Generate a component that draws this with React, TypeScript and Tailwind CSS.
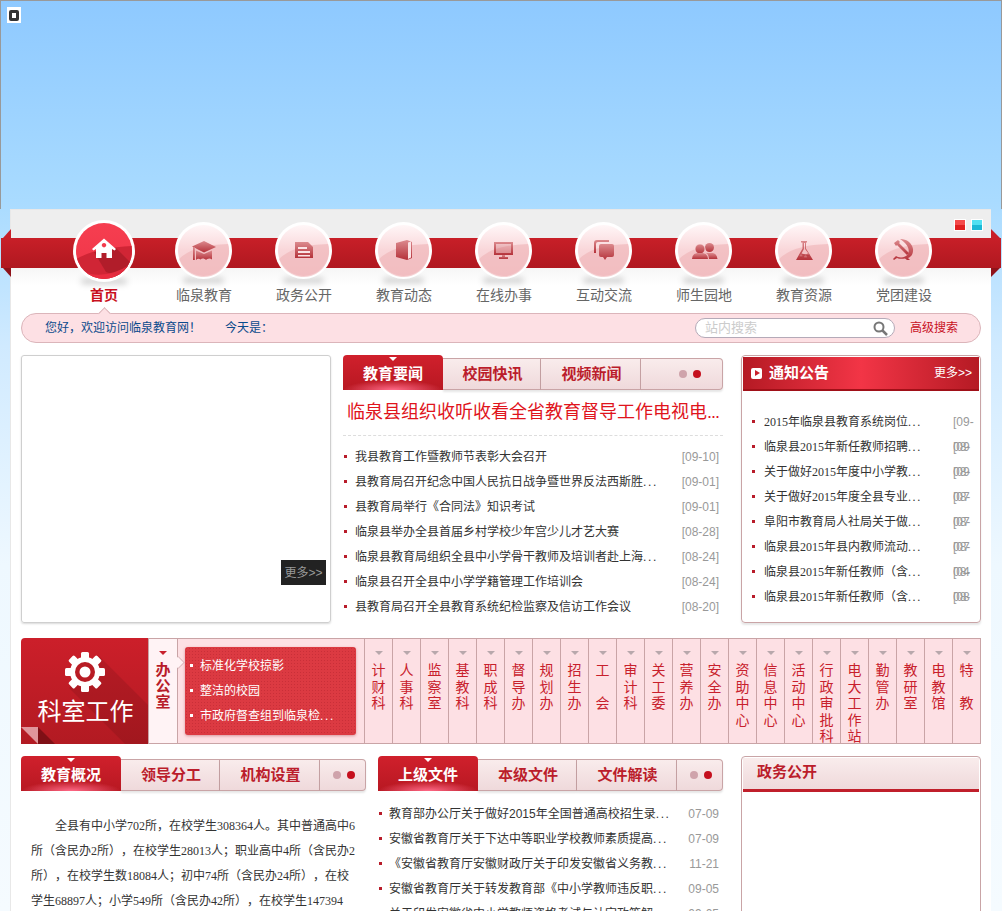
import React from "react";

const NAV: [string, React.ReactNode][] = [
  ["临泉教育", <g><path d="M29 19l12 6-12 5.500-12-6z" /><path d="M21 28.500l8 3.500 8-3.500v9c-2.500-2-5-.5-6 .5-1.500-1.500-4-2-5.500-.5-1.500-1-3-1-4.500.5z" /><rect x="18" y="25" width="1.800" height="13" /></g>],
  ["政务公开", <g><path d="M20 20h13l5 5v11H20z" /><path d="M23 25h9v2h-9zM23 29h12v2H23zM23 33h12v1.500H23z" fill="#fbe3e5" /></g>],
  ["教育动态", <g><path d="M21 21l11-3 5 2v16l-5 2-11-3z" /><path d="M33 20.500l3-1v16l-3 1.500z" fill="#fbe3e5" /></g>],
  ["在线办事", <g><path fillRule="evenodd" d="M19 20h19v13H19zM21 22v9h15v-9z" /><path d="M21 22h15v9H21z" opacity=".35" /><path d="M27 33h3v2h3v2h-9v-2h3z" /></g>],
  ["互动交流", <g><path d="M19 31V21q0-3 3-3h12v2H23q-2 0-2 2v9z" /><path d="M26 22h11q2 0 2 2v9q0 2-2 2h-5l-2 3-2-3h-2q-2 0-2-2v-9q0-2 2-2z" /></g>],
  ["师生园地", <g><circle cx="34.500" cy="25.500" r="4.500" /><path d="M31 31h7q4 1 4.500 6H34q0-4-3-6z" /><circle cx="25" cy="27" r="5" stroke="#fbdfe1" strokeWidth=".7" /><path d="M17 37q0-5 5-6h6q5 1 5 6z" /></g>],
  ["教育资源", <g><path fillRule="evenodd" d="M26 19h6v1.500h-1v6L38 38H21l6.500-11.500v-6h-1.500zM29 21v6l-2.500 4.500c3 1 6 1 7 0L30 27v-6z" /><circle cx="26" cy="34" r="1.500" /><circle cx="30.500" cy="35" r="1.500" /><circle cx="33" cy="32.500" r="1.200" /></g>],
  ["党团建设", <g><path d="M25 17c7 0 12 4 13 10 .5 5-2 8-5 9l2 2h-3l-2-1.500c-3 .5-6 .5-8-.5l-3 2-1-1 3-3 2 1c4 1 8 0 10-3 2-4 0-10-8-15z" /><path d="M19 21l4-3 2 2-1 1 10 10-2 2-10-10-1 1z" /></g>],
];

function Circle({ idx, children }: { idx: number; children: React.ReactNode }) {
  const g = `art${idx}`;
  const b = `bg${idx}`;
  return (
    <svg width="57" height="57" viewBox="0 0 57 57">
      <defs>
        <linearGradient id={b} x1="0" y1="0" x2="0" y2="1">
          <stop offset="0" stopColor="#fff6f7" />
          <stop offset="0.5" stopColor="#f9d6d9" />
          <stop offset="1" stopColor="#f6cdd0" />
        </linearGradient>
        <linearGradient id={g} x1="0" y1="0" x2="0" y2="1">
          <stop offset="0" stopColor="#dc8a8e" />
          <stop offset="1" stopColor="#b5323a" />
        </linearGradient>
      </defs>
      <circle cx="28.500" cy="28.500" r="28.500" fill="#fff" />
      <circle cx="28.500" cy="28.500" r="25.500" fill={`url(#${b})`} />
      <path d="M4 37Q18 23 53 22A25.500 25.500 0 0 1 4 37Z" fill="#efb3b5" opacity=".6" />
      <g fill={`url(#${g})`}>{children}</g>
    </svg>
  );
}

function HomeCircle() {
  return (
    <svg width="62" height="62" viewBox="0 0 62 62">
      <defs>
        <linearGradient id="hb" x1="0" y1="0" x2="0" y2="1">
          <stop offset="0" stopColor="#f63e50" />
          <stop offset="1" stopColor="#ef3548" />
        </linearGradient>
        <clipPath id="hc"><circle cx="31" cy="31" r="28" /></clipPath>
      </defs>
      <circle cx="31" cy="31" r="31" fill="#fff" />
      <circle cx="31" cy="31" r="28" fill="url(#hb)" />
      <g clipPath="url(#hc)">
        <path d="M2 40Q20 28 60 26V62H0Z" fill="#d02535" />
        <path d="M21 32l22-4 16 16-10 14-16-6z" fill="#a91c28" opacity=".8" />
        <path d="M6 50Q30 62 58 44V62H6Z" fill="#ef3044" opacity=".8" />
      </g>
      <path fill="#fff" fillRule="evenodd" d="M31 18.500l12 10.500-1.500 1.500-2.500-1.500v9h-5.500v-5h-5v5H23v-9l-2.500 1.500L19 29zM31 23a2.200 2.200 0 1 0 .01 0z" />
    </svg>
  );
}

function Tabs({ tabs, widths, dots }: { tabs: string[]; widths: string[]; dots: string }) {
  return (
    <div className="flex items-end h-[36px] pb-[1px]">
      <div className={`relative h-[35px] ${widths[0]} rounded-t-[4px] flex items-center justify-center pt-[3px] text-white text-[15px] font-bold bg-[radial-gradient(ellipse_50%_28%_at_50%_100%,#ff6a88,transparent),linear-gradient(#d0202c,#b81822)]`}>
        <span className="absolute top-[2px] left-1/2 -ml-[4px] w-0 h-0 border-x-[4px] border-x-transparent border-t-[4px] border-t-white" />
        {tabs[0]}
      </div>
      {tabs.slice(1).map((t, i) => (
        <div key={t} className={`h-[32px] ${widths[i + 1]} border-y border-r border-[#c9a4a6] pl-[2px] flex items-center justify-center text-[15px] font-bold text-[#bb1d2b] bg-gradient-to-b from-[#f9ecec] to-[#efd9db] shadow-[0_2px_2px_rgba(0,0,0,0.1)]`}>
          {t}
        </div>
      ))}
      <div className={`h-[32px] ${widths[3]} ${dots} border-y border-r border-[#c9a4a6] rounded-r-[4px] flex items-center justify-center gap-[6px] bg-gradient-to-b from-[#f9ecec] to-[#efd9db] shadow-[0_2px_2px_rgba(0,0,0,0.1)]`}>
        <span className="w-[8px] h-[8px] rounded-full bg-[#cfa3ab]" />
        <span className="w-[8px] h-[8px] rounded-full bg-[#c5101e]" />
      </div>
    </div>
  );
}

const Dots = () => <span className="tracking-[1.6px]">...</span>;

function NewsRow({ t, d, dots, gap }: { t: string; d: string; dots?: boolean; gap: string }) {
  return (
    <div className="h-[25px] flex items-center text-[12px] text-[#333]">
      <span className="ml-[1px] w-[3px] h-[3px] bg-[#b81c2a]" />
      <span className={`${gap} flex-1 whitespace-nowrap overflow-hidden`}>{t}{dots && <Dots />}</span>
      <span className="text-[#999] pr-[4px]">{d}</span>
    </div>
  );
}

const NOTICE: [string, string][] = [
  ["2015年临泉县教育系统岗位", ""],
  ["临泉县2015年新任教师招聘", "[09"],
  ["关于做好2015年度中小学教", "[09"],
  ["关于做好2015年度全县专业", "[07"],
  ["阜阳市教育局人社局关于做", "[07"],
  ["临泉县2015年县内教师流动", "[07"],
  ["临泉县2015年新任教师（含", "[04"],
  ["临泉县2015年新任教师（含", "[08"],
];

const COLS: string[][] = [
  ["计", "财", "科"], ["人", "事", "科"], ["监", "察", "室"], ["基", "教", "科"], ["职", "成", "科"],
  ["督", "导", "办"], ["规", "划", "办"], ["招", "生", "办"], ["工", "\u00a0", "会"], ["审", "计", "科"],
  ["关", "工", "委"], ["营", "养", "办"], ["安", "全", "办"], ["资", "助", "中", "心"], ["信", "息", "中", "心"],
  ["活", "动", "中", "心"], ["行", "政", "审", "批", "科"], ["电", "大", "工", "作", "站"], ["勤", "管", "办"],
  ["教", "研", "室"], ["电", "教", "馆"], ["特", "\u00a0", "教"],
];

export default function App() {
  return (
    <div className="relative w-[1002px] h-[911px] overflow-hidden bg-[linear-gradient(#8ec9ff,#a9dbff_22%,#d0eaff_38%,#eef8ff_62%,#f5fbff)] [text-spacing-trim:space-all] font-['Liberation_Sans','Noto_Sans_CJK_SC',sans-serif]">
      <div className="h-[209px] border border-b-0 border-[#999] pt-[6px] pl-[6px]">
        <div className="w-[14px] h-[16px] bg-white flex items-center justify-center">
          <div className="w-[10px] h-[11px] border-[3px] border-[#333] rounded-[2px] bg-white" />
        </div>
      </div>

      <div className="ml-[10px] w-[981px] border-l border-t border-[#e8e8e8] bg-white">
        {/* header */}
        <div className="h-[28px] bg-[#eeeeee] flex justify-end items-start gap-[5px] pt-[9px] pr-[8px]">
          <span className="w-[12px] h-[12px] border border-white bg-[linear-gradient(#f44a4a_50%,#e01f1f_50%)]" />
          <span className="w-[12px] h-[12px] border border-white bg-[linear-gradient(#4fe0f2_50%,#1ab8d6_50%)]" />
        </div>
        <div className="relative h-[30px] -ml-[10px] -mr-[10px] bg-gradient-to-b from-[#c81f28] to-[#b01820]">
          <svg className="absolute left-0 -top-[9px]" width="10" height="48" viewBox="0 0 10 48">
            <path d="M10 0V9H2z" fill="#c81f28" />
            <path d="M10 48V39H2z" fill="#8f121a" />
          </svg>
          <svg className="absolute right-0 -top-[9px]" width="10" height="48" viewBox="0 0 10 48">
            <path d="M0 0V9H9z" fill="#c81f28" />
            <path d="M0 48V39H9z" fill="#8f121a" />
          </svg>
        </div>
        <div className="h-[45px] bg-gradient-to-b from-[#f6f6f6] to-white to-40%" />
        <div className="relative -mt-[94px] mb-[8px] ml-[43px] flex">
          <div className="w-[100px] flex flex-col items-center">
            <div className="relative h-[63px] flex items-center">
              <span className="absolute -bottom-[2px] left-[8px] w-[46px] h-[5px] rounded-full bg-black/20 blur-[3px]" />
              <span className="relative"><HomeCircle /></span>
            </div>
            <div className="mt-[3px] h-[20px] leading-[20px] text-[14px] font-bold text-[#c8101e]">首页</div>
          </div>
          {NAV.map(([label, art], i) => (
            <div key={label} className="w-[100px] flex flex-col items-center">
              <div className="relative h-[63px] flex items-center -ml-[1px]">
                <span className="absolute -bottom-[1px] left-[8px] w-[41px] h-[5px] rounded-full bg-black/20 blur-[3px]" />
                <span className="relative"><Circle idx={i}>{art}</Circle></span>
              </div>
              <div className="mt-[3px] h-[20px] leading-[20px] text-[14px] text-[#666]">{label}</div>
            </div>
          ))}
        </div>

        <div className="mx-[10px]">
          {/* welcome bar */}
          <div className="relative h-[30px] rounded-full bg-[#fde0e4] border border-[#dbb5ba] flex items-center text-[12px] text-[#0a4a8c]">
            <span className="absolute -top-[5px] left-[78px] w-[9px] h-[9px] rotate-45 bg-[#fde0e4] border-l border-t border-[#dbb5ba]" />
            <span className="ml-[23px] w-[180px]">您好，欢迎访问临泉教育网！</span>
            <span className="flex-1">今天是：</span>
            <div className="relative w-[200px] h-[20px] rounded-full bg-white border border-[#b4aab8] flex items-center pl-[9px] text-[13px] text-[#ccc]">
              站内搜索
              <svg className="absolute right-[6px] top-[2px]" width="15" height="15" viewBox="0 0 15 15" fill="none" stroke="#777">
                <circle cx="6" cy="6" r="4.500" strokeWidth="2" />
                <path d="M9.500 9.500L14 14" strokeWidth="2.500" />
              </svg>
            </div>
            <span className="ml-[15px] mr-[22px] text-[#c8101e]">高级搜索</span>
          </div>

          {/* row 1 */}
          <div className="mt-[12px] flex h-[268px]">
            <div className="relative w-[310px] border border-[#cfcfcf] rounded-[3px] shadow-[0_1px_2px_rgba(0,0,0,0.15)]">
              <div className="absolute left-[259px] top-[204px] w-[45px] h-[25px] bg-[#222] text-[#999] text-[12px] flex items-center justify-center">更多&gt;&gt;</div>
            </div>
            <div className="ml-[12px] w-[380px]">
              <Tabs tabs={["教育要闻", "校园快讯", "视频新闻"]} widths={["w-[100px]", "w-[98px]", "w-[100px]", "w-[82px]"]} dots="pl-[16px]" />
              <div className="h-[45px] border-b border-dashed border-[#ddd] pl-[4px] pt-[9px] text-[18px] leading-[24px] text-[#e0141c] whitespace-nowrap">临泉县组织收听收看全省教育督导工作电视电<span className="tracking-[-1px]">...</span></div>
              <div className="pt-[8px]">
                <NewsRow gap="ml-[8px]" t="我县教育工作暨教师节表彰大会召开" d="[09-10]" />
                <NewsRow gap="ml-[8px]" t="县教育局召开纪念中国人民抗日战争暨世界反法西斯胜" d="[09-01]" dots />
                <NewsRow gap="ml-[8px]" t="县教育局举行《合同法》知识考试" d="[09-01]" />
                <NewsRow gap="ml-[8px]" t="临泉县举办全县首届乡村学校少年宫少儿才艺大赛" d="[08-28]" />
                <NewsRow gap="ml-[8px]" t="临泉县教育局组织全县中小学骨干教师及培训者赴上海" d="[08-24]" dots />
                <NewsRow gap="ml-[8px]" t="临泉县召开全县中小学学籍管理工作培训会" d="[08-24]" />
                <NewsRow gap="ml-[8px]" t="县教育局召开全县教育系统纪检监察及信访工作会议" d="[08-20]" />
              </div>
            </div>
            <div className="ml-[18px] w-[240px] border border-[#c9a4a6] rounded-[4px] p-[1px] shadow-[0_2px_2px_rgba(0,0,0,0.1)]">
              <div className="h-[34px] border-b-2 border-[#a01018] flex items-center bg-[linear-gradient(90deg,#b51a24,#f23546_50%,#b51a24)] text-white">
                <span className="ml-[8px] w-[11px] h-[11px] rounded-[2px] bg-white flex items-center justify-center">
                  <span className="ml-[1px] w-0 h-0 border-y-[3.5px] border-y-transparent border-l-[5px] border-l-[#c8202c]" />
                </span>
                <span className="ml-[7px] text-[15px] font-bold flex-1">通知公告</span>
                <span className="text-[12px] mr-[7px]">更多&gt;&gt;</span>
              </div>
              <div className="pt-[18px]">
                {NOTICE.map(([t, o], i) => (
                  <div key={i} className="h-[25px] flex items-center text-[12px] text-[#333] font-['Liberation_Serif','Noto_Sans_CJK_SC',serif]">
                    <span className="ml-[9px] w-[3px] h-[3px] bg-[#b81c2a]" />
                    <span className="ml-[9px] w-[189px] whitespace-nowrap overflow-hidden">{t}<Dots /></span>
                    <span className="relative w-[21px] overflow-hidden whitespace-nowrap text-[#999] font-['Liberation_Sans',sans-serif]">
                      {o ? "08-" : "[09-"}
                      {o && <span className="absolute left-0 top-0">{o}</span>}
                    </span>
                  </div>
                ))}
              </div>
            </div>
          </div>

          {/* departments */}
          <div className="mt-[15px] flex h-[106px]">
            <div className="relative w-[127px] rounded-tl-[4px] overflow-hidden bg-gradient-to-b from-[#cc1f2a] to-[#b21a22] flex flex-col items-center text-white">
              <svg className="absolute inset-0" width="127" height="106" viewBox="0 0 127 106">
                <path d="M48 50L78 18L127 67V106H104Z" fill="#000" opacity=".09" />
                <path d="M0 89H17V106Z" fill="#e0959b" />
                <path d="M17 89L34 106H17Z" fill="#7f1016" />
              </svg>
              <svg className="relative mt-[14px]" width="40" height="40" viewBox="-20 -20 40 40">
                {[0, 45, 90, 135, 180, 225, 270, 315].map((a) => (
                  <rect key={a} x="-4" y="-20" width="8" height="10" rx="1.500" fill="#fff" transform={`rotate(${a})`} />
                ))}
                <circle r="15" fill="#fff" />
                <circle r="10" fill="#b81c24" />
                <circle r="5.500" fill="#fff" />
              </svg>
              <div className="relative mt-[4px] ml-[2px] text-[24px] leading-[32px] whitespace-nowrap">科室工作</div>
            </div>
            <div className="relative w-[29px] border-y border-l border-[#c9a4a6] bg-[#fff3f5] flex flex-col items-center">
              <span className="mt-[12px] w-0 h-0 border-x-[4px] border-x-transparent border-t-[4px] border-t-[#c8202c]" />
              <div className="mt-[7px] text-[15px] leading-[16px] font-bold text-[#b81c2a] text-center">办<br />公<br />室</div>
              <span className="absolute -right-[6px] top-[19px] w-[9px] h-[9px] rotate-45 bg-[#fff3f5] border-t border-r border-[#dbb5ba]" />
            </div>
            <div className="w-[188px] border border-[#c9a4a6] bg-[#fde0e4] pl-[7px] pr-[8px] pt-[8px]">
              <div className="h-[88px] rounded-[3px] shadow-[0_1px_3px_rgba(160,40,50,0.4)] bg-[#dc3a42] bg-[radial-gradient(#c92f38_1px,transparent_1px)] bg-[length:3px_3px] pt-[6px] text-white text-[12px]">
                {["标准化学校掠影", "整洁的校园", "市政府督查组到临泉检"].map((t, i) => (
                  <div key={t} className="h-[25px] flex items-center whitespace-nowrap">
                    <span className="ml-[5px] w-[3px] h-[3px] bg-white" />
                    <span className="ml-[6px] pl-[1px]">{t}{i === 2 && <Dots />}</span>
                  </div>
                ))}
              </div>
            </div>
            {COLS.map((c, i) => (
              <div key={i} className="w-[28px] border-y border-r border-[#c9a4a6] bg-[#fde0e4] flex flex-col items-center">
                <span className="mt-[12px] w-0 h-0 border-x-[4px] border-x-transparent border-t-[4px] border-t-[#b8a8ac]" />
                <div className="mt-[7px] text-[14px] leading-[16.5px] text-[#c8202c] text-center">
                  {c.map((ch, j) => <div key={j}>{ch}</div>)}
                </div>
              </div>
            ))}
          </div>

          {/* row 3 */}
          <div className="mt-[12px] flex">
            <div className="w-[345px]">
              <Tabs tabs={["教育概况", "领导分工", "机构设置"]} widths={["w-[100px]", "w-[99px]", "w-[100px]", "w-[46px]"]} dots="pl-[2px]" />
              <p className="mt-[22px] ml-[10px] w-[324px] text-[12px] leading-[25px] text-[#333] indent-[24px] font-['Liberation_Serif','Noto_Sans_CJK_SC',serif]">
                全县有中小学702所，在校学生308364人。其中普通高中6所（含民办2所），在校学生28013人；职业高中4所（含民办2所），在校学生数18084人；初中74所（含民办24所），在校学生68897人；小学549所（含民办42所），在校学生147394人。
              </p>
            </div>
            <div className="ml-[12px] w-[345px]">
              <Tabs tabs={["上级文件", "本级文件", "文件解读"]} widths={["w-[100px]", "w-[99px]", "w-[100px]", "w-[46px]"]} dots="pl-[2px]" />
              <div className="pt-[9px]">
                <NewsRow gap="ml-[7px]" t="教育部办公厅关于做好2015年全国普通高校招生录" d="07-09" dots />
                <NewsRow gap="ml-[7px]" t="安徽省教育厅关于下达中等职业学校教师素质提高" d="07-09" dots />
                <NewsRow gap="ml-[7px]" t="《安徽省教育厅安徽财政厅关于印发安徽省义务教" d="11-21" dots />
                <NewsRow gap="ml-[7px]" t="安徽省教育厅关于转发教育部《中小学教师违反职" d="09-05" dots />
                <NewsRow gap="ml-[7px]" t="关于印发安徽省中小学教师资格考试与认定政策解" d="09-05" dots />
              </div>
            </div>
            <div className="ml-[18px] w-[240px] h-[200px] border border-[#c9a4a6] rounded-t-[4px] p-[1px]">
              <div className="h-[34px] border-b-[3px] border-[#c01f2b] bg-gradient-to-b from-[#f9ecec] to-[#efd9db] flex items-center pl-[14px] pb-[3px] text-[15px] font-bold text-[#bb1d2b]">政务公开</div>
            </div>
          </div>
        </div>
      </div>
    </div>
  );
}
